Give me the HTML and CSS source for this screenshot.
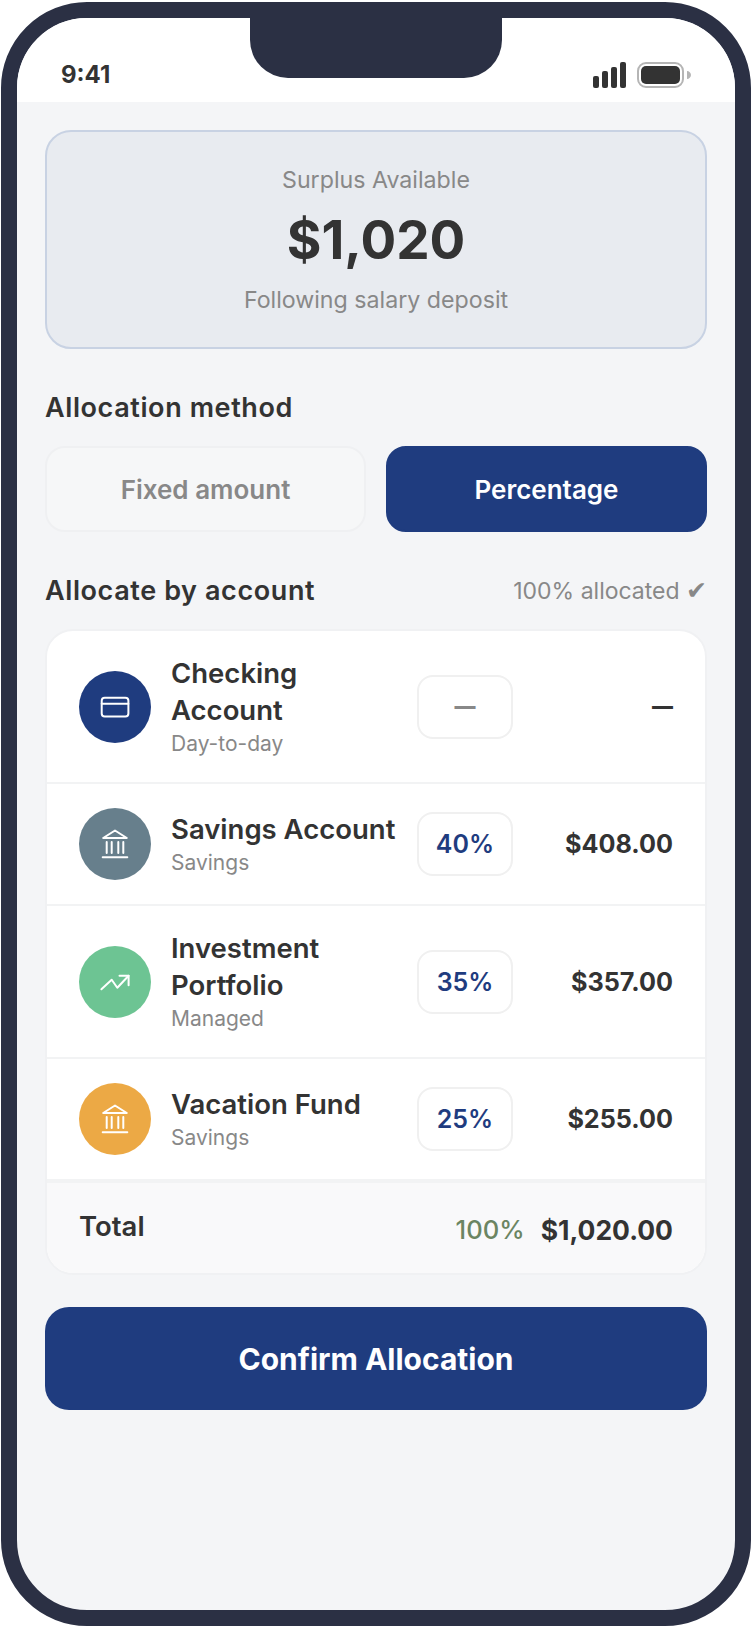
FILE: index.html
```html
<!DOCTYPE html>
<html lang="en">
<head>
    <meta charset="UTF-8">
    <meta name="viewport" content="width=device-width, initial-scale=1.0">
    <title>Allocate Surplus</title>
    <link rel="stylesheet" href="styles.css">
</head>
<body>
    <div class="phone">
        <div class="notch"></div>
        <div class="status-bar">
            <span class="time">9:41</span>
            <div class="status-icons">
                <svg width="34" height="26" viewBox="0 0 34 26" fill="#333">
                    <rect x="0" y="14" width="6" height="12" rx="2"/>
                    <rect x="9" y="9" width="6" height="17" rx="2"/>
                    <rect x="18" y="5" width="6" height="21" rx="2"/>
                    <rect x="27" y="0" width="6" height="26" rx="2"/>
                </svg>
                <svg width="54" height="26" viewBox="0 0 54 26">
                    <rect x="1" y="1" width="45" height="24" rx="8" fill="none" stroke="#b5b5b5" stroke-width="2"/>
                    <rect x="4" y="4" width="39" height="18" rx="5" fill="#333"/>
                    <path d="M50 9c2 0 4 2 4 4s-2 4-4 4z" fill="#b5b5b5"/>
                </svg>
            </div>
        </div>

        <main class="screen">
            <section class="summary">
                <div class="summary-label">Surplus Available</div>
                <div class="summary-value">$1,020</div>
                <div class="summary-label">Following salary deposit</div>
            </section>

            <h2 class="section-title method-title">Allocation method</h2>
            <div class="method-toggle">
                <button class="method-btn">Fixed amount</button>
                <button class="method-btn active">Percentage</button>
            </div>

            <div class="section-head">
                <h2 class="section-title">Allocate by account</h2>
                <span class="allocated">100% allocated <span class="check">✔</span></span>
            </div>

            <section class="accounts">
                <div class="account-row tall">
                    <div class="account-icon navy">
                        <svg width="36" height="36" viewBox="0 0 36 36" fill="none" stroke="#fff" stroke-width="2" stroke-linecap="round" stroke-linejoin="round">
                            <rect x="4.700" y="8.700" width="26.700" height="18.700" rx="3"/>
                            <path d="M4.700 14.700h26.700"/>
                        </svg>
                    </div>
                    <div class="account-info">
                        <div class="account-name">Checking Account</div>
                        <div class="account-type">Day-to-day</div>
                    </div>
                    <div class="percent-box muted">—</div>
                    <div class="account-amount dash">—</div>
                </div>

                <div class="account-row">
                    <div class="account-icon slate">
                        <svg width="36" height="36" viewBox="0 0 36 36" fill="none" stroke="#fff" stroke-width="2" stroke-linecap="round" stroke-linejoin="round">
                            <path d="M6.200 12L18 4.500 29.800 12z"/>
                            <path d="M5.700 31.300h24.600M9.700 16v11M14.700 16v11M21.300 16v11M26.300 16v11"/>
                        </svg>
                    </div>
                    <div class="account-info">
                        <div class="account-name">Savings Account</div>
                        <div class="account-type">Savings</div>
                    </div>
                    <div class="percent-box">40%</div>
                    <div class="account-amount">$408.00</div>
                </div>

                <div class="account-row tall">
                    <div class="account-icon green">
                        <svg width="36" height="36" viewBox="0 0 36 36" fill="none" stroke="#fff" stroke-width="2" stroke-linecap="round" stroke-linejoin="round">
                            <path d="M4.400 25.200l10.300-9.500 5.600 8 11.300-12"/>
                            <path d="M22.500 11.700h9.100v9.500"/>
                        </svg>
                    </div>
                    <div class="account-info">
                        <div class="account-name">Investment Portfolio</div>
                        <div class="account-type">Managed</div>
                    </div>
                    <div class="percent-box">35%</div>
                    <div class="account-amount">$357.00</div>
                </div>

                <div class="account-row">
                    <div class="account-icon amber">
                        <svg width="36" height="36" viewBox="0 0 36 36" fill="none" stroke="#fff" stroke-width="2" stroke-linecap="round" stroke-linejoin="round">
                            <path d="M6.200 12L18 4.500 29.800 12z"/>
                            <path d="M5.700 31.300h24.600M9.700 16v11M14.700 16v11M21.300 16v11M26.300 16v11"/>
                        </svg>
                    </div>
                    <div class="account-info">
                        <div class="account-name">Vacation Fund</div>
                        <div class="account-type">Savings</div>
                    </div>
                    <div class="percent-box">25%</div>
                    <div class="account-amount">$255.00</div>
                </div>

                <div class="total-row">
                    <span class="total-label">Total</span>
                    <div class="total-values">
                        <span class="total-percent">100%</span>
                        <span class="total-amount">$1,020.00</span>
                    </div>
                </div>
            </section>

            <button class="confirm-btn">Confirm Allocation</button>
        </main>
    </div>
</body>
</html>
```

FILE: styles.css
```css
* {
    box-sizing: border-box;
}
body {
    font-family: Inter, "Liberation Sans", sans-serif;
    background-color: white;
    color: #333;
    margin: 0;
    padding: 2px 4px 4px 1px;
}
h2 {
    margin: 0;
}
button {
    font-family: inherit;
    border: none;
    padding: 0;
}
.phone {
    position: relative;
    width: 750px;
    height: 1624px;
    border: 16px solid #2b3044;
    border-radius: 86px;
    background-color: #f4f5f7;
    overflow: hidden;
}
.notch {
    position: absolute;
    top: 0;
    left: 233px;
    width: 252px;
    height: 60px;
    background-color: #2b3044;
    border-radius: 0 0 38px 38px;
}
.status-bar {
    display: flex;
    justify-content: space-between;
    align-items: center;
    height: 84px;
    padding: 30px 44px 0 44px;
    background-color: white;
}
.time {
    font-size: 24px;
    font-weight: 700;
    line-height: 52px;
}
.status-icons {
    display: flex;
    gap: 10px;
}
.screen {
    padding: 28px 28px 0;
}
.summary {
    height: 219px;
    padding-top: 32px;
    text-align: center;
    background-color: #e8ebf0;
    border: 2px solid #c8d2e3;
    border-radius: 26px;
}
.summary-label {
    font-size: 23.200px;
    line-height: 32px;
    color: #888;
}
.summary-value {
    font-size: 53px;
    font-weight: 700;
    line-height: 76px;
    margin: 6px 0 6px;
}
.section-title {
    font-size: 27px;
    font-weight: 600;
    line-height: 36px;
    letter-spacing: 0.6px;
}
.method-title {
    margin-top: 41px;
}
.method-toggle {
    display: flex;
    gap: 20px;
    margin-top: 20px;
}
.method-btn {
    flex: 1;
    height: 86px;
    font-size: 26px;
    font-weight: 600;
    color: #888;
    background-color: #f6f7f8;
    border: 2px solid #eff0f2;
    border-radius: 20px;
}
.method-btn.active {
    color: white;
    background-color: #1f3c7f;
    border-color: #1f3c7f;
}
.section-head {
    display: flex;
    justify-content: space-between;
    align-items: center;
    height: 36px;
    margin-top: 41px;
}
.allocated {
    font-size: 23px;
    line-height: 36px;
    color: #888;
}
.check {
    font-family: "DejaVu Sans", sans-serif;
    font-size: 25px;
    line-height: 1;
}
.accounts {
    margin-top: 20px;
    background-color: white;
    border: 2px solid #f0f1f3;
    border-radius: 28px;
    overflow: hidden;
}
.account-row {
    display: flex;
    align-items: center;
    height: 122px;
    padding: 0 32px;
    border-bottom: 2px solid #f2f3f4;
}
.account-row.tall {
    height: 153px;
}
.account-icon {
    flex: none;
    display: flex;
    align-items: center;
    justify-content: center;
    width: 72px;
    height: 72px;
    border-radius: 50%;
}
.navy { background-color: #1f3c7f; }
.slate { background-color: #677f8c; }
.green { background-color: #6dc493; }
.amber { background-color: #eca945; }
.account-info {
    flex: 1;
    min-width: 0;
    margin: 0 18px 0 20px;
}
.account-name {
    font-size: 27.500px;
    font-weight: 600;
    line-height: 37px;
}
.account-type {
    font-size: 21px;
    line-height: 30px;
    color: #888;
}
.percent-box {
    flex: none;
    width: 96px;
    height: 64px;
    line-height: 60px;
    text-align: center;
    font-size: 25px;
    font-weight: 600;
    color: #1f3c7f;
    border: 2px solid #f0f0f0;
    border-radius: 16px;
}
.percent-box.muted {
    color: #888;
    font-size: 21px;
    font-weight: 900;
}
.account-amount {
    flex: none;
    width: 160px;
    text-align: right;
    font-size: 25.200px;
    font-weight: 700;
}
.account-amount.dash {
    font-size: 21px;
    font-weight: 900;
}
.total-row {
    display: flex;
    justify-content: space-between;
    height: 92px;
    padding: 25px 32px 0;
    background-color: #f9f9fa;
    border-top: 2px solid #f2f3f4;
}
.total-label {
    font-size: 27.500px;
    font-weight: 600;
    line-height: 36px;
}
.total-values {
    display: flex;
    gap: 16px;
    line-height: 44px;
}
.total-percent {
    font-size: 25.600px;
    font-weight: 500;
    color: #6b8562;
}
.total-amount {
    font-size: 26.500px;
    font-weight: 700;
}
.confirm-btn {
    display: block;
    width: 100%;
    height: 103px;
    margin-top: 32px;
    font-size: 30px;
    font-weight: 700;
    color: white;
    background-color: #1f3c7f;
    border-radius: 24px;
}
```
